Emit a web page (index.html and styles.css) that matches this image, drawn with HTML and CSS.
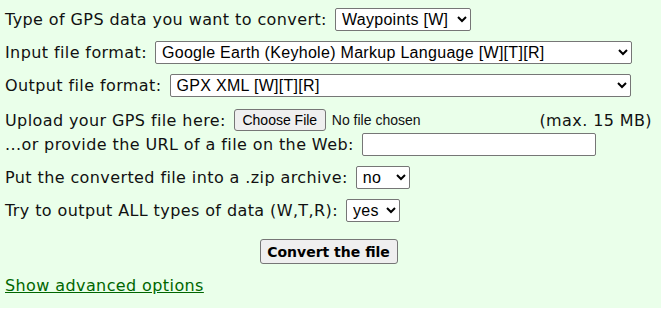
FILE: index.html
```html
<!DOCTYPE html>
<html lang="en">
<head>
<meta charset="UTF-8">
<title>GPS file converter</title>
<link rel="stylesheet" href="styles.css">
</head>
<body>
<form class="converter">
  <div class="row">
    <label>Type of GPS data you want to convert:</label>
    <select class="sel sel-type"><option>Waypoints [W]</option></select>
  </div>
  <div class="row">
    <label>Input file format:</label>
    <select class="sel sel-input"><option>Google Earth (Keyhole) Markup Language [W][T][R]</option></select>
  </div>
  <div class="row">
    <label>Output file format:</label>
    <select class="sel sel-output"><option>GPX XML [W][T][R]</option></select>
  </div>
  <div class="row row-upload">
    <label>Upload your GPS file here:</label>
    <input class="file" type="file">
    <span class="max">(max. 15 MB)</span>
  </div>
  <div class="row row-url">
    <label>...or provide the URL of a file on the Web:</label>
    <input class="url" type="text">
  </div>
  <div class="row">
    <label>Put the converted file into a .zip archive:</label>
    <select class="sel sel-small"><option>no</option></select>
  </div>
  <div class="row">
    <label>Try to output ALL types of data (W,T,R):</label>
    <select class="sel sel-small"><option>yes</option></select>
  </div>
  <div class="submit-row">
    <button class="convert" type="button">Convert the file</button>
  </div>
  <a class="advanced" href="#">Show advanced options</a>
</form>
</body>
</html>
```

FILE: styles.css
```css
body {
  margin: 0;
  padding: 0;
  font-family: "DejaVu Sans", Verdana, sans-serif;
  font-size: 16px;
  letter-spacing: 0.4px;
  color: #111;
  background-color: #fff;
}

.converter {
  background-color: #eaffea;
  height: 308px;
  padding: 8px 9px 0 5px;
  box-sizing: border-box;
}

.row {
  display: flex;
  align-items: center;
  gap: 8px;
  height: 23px;
  margin-bottom: 10px;
  white-space: nowrap;
}

.row-upload {
  height: 22px;
  margin-top: 12px;
  margin-bottom: 2px;
}

.sel {
  font-family: "Liberation Sans", Arial, sans-serif;
  font-size: 16px;
  letter-spacing: 0.3px;
  height: 23px;
  color: #000;
  background-color: #fff;
  border: 1px solid #767676;
  border-radius: 2px;
  padding: 0 2px;
}
.sel-type { width: 136px; }
.sel-input { width: 477px; }
.sel-output { width: 461px; }
.sel-small { width: 54px; }

.file {
  font-family: "Liberation Sans", Arial, sans-serif;
  font-size: 14px;
  letter-spacing: 0;
  color: #111;
}
.file::file-selector-button {
  font-family: "Liberation Sans", Arial, sans-serif;
  font-size: 14px;
  width: 92px;
  height: 22px;
  margin-right: 6px;
  border: 1px solid #767676;
  border-radius: 3px;
  background-color: #efefef;
  color: #000;
}

.max {
  margin-left: auto;
}

.url {
  width: 234px;
  height: 23px;
  box-sizing: border-box;
  border: 1px solid #767676;
  border-radius: 2px;
  background-color: #fff;
}

.submit-row {
  display: flex;
  justify-content: center;
  margin-top: 17px;
}

.convert {
  font-family: "DejaVu Sans", Verdana, sans-serif;
  font-weight: bold;
  font-size: 14px;
  letter-spacing: 0;
  white-space: nowrap;
  padding: 0;
  width: 138px;
  height: 25px;
  border: 1px solid #767676;
  border-radius: 3px;
  background-color: #efefef;
  color: #000;
}

.advanced {
  display: inline-block;
  margin-top: 12px;
  color: #006600;
}
```
